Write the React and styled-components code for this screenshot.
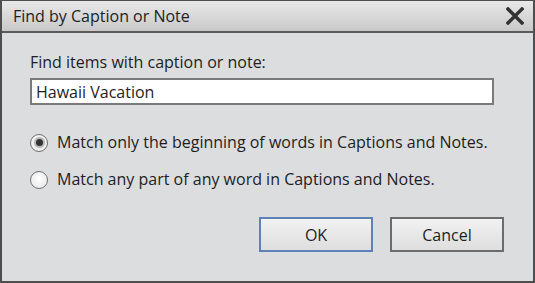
import React, { useState } from "react"
import styled, { createGlobalStyle } from "styled-components"

const Global = createGlobalStyle`
  html, body {
    margin: 0;
    padding: 0;
    background: #dcdddf;
  }
  * {
    box-sizing: border-box;
  }
`

const Window = styled.div`
  width: 535px;
  height: 283px;
  display: flex;
  flex-direction: column;
  border: 2px solid #4e4e4e;
  border-top-width: 1px;
  background: #dcdddf;
  font-family: "Open Sans", "Noto Sans", sans-serif;
  color: #1e1e1e;
`

const TitleBar = styled.div`
  height: 32px;
  flex: none;
  display: flex;
  align-items: center;
  justify-content: space-between;
  padding: 0 7px 0 11px;
  background: linear-gradient(#e8e8e8, #c9c9c9);
  border-bottom: 2px solid #5a5a5a;
`

const Title = styled.span`
  font-size: 16px;
  color: #222;
`

const CloseButton = styled.button`
  border: none;
  background: none;
  padding: 0;
  width: 22px;
  height: 22px;
  display: flex;
  align-items: center;
  justify-content: center;
  cursor: pointer;
`

const Body = styled.div`
  flex: 1;
  display: flex;
  flex-direction: column;
  padding: 19px 29px 0 28px;
`

const Label = styled.label`
  font-size: 16px;
  line-height: 21px;
  margin-bottom: 5px;
`

const TextInput = styled.input`
  width: 464px;
  height: 27px;
  border: 2px solid #7a7a7a;
  background: #fff;
  font-family: inherit;
  font-size: 16px;
  padding: 0 4px;
  color: #1e1e1e;
  outline: none;
`

const Options = styled.div`
  display: flex;
  flex-direction: column;
  gap: 16px;
  margin-top: 27px;
`

const Option = styled.label`
  display: flex;
  align-items: center;
  gap: 9px;
  font-size: 16px;
  line-height: 21px;
  cursor: pointer;
`

const RadioDot = styled.span`
  flex: none;
  width: 18px;
  height: 18px;
  border-radius: 50%;
  border: 1px solid #6e6e6e;
  background: radial-gradient(circle at 50% 40%, #ffffff, #e2e2e2);
  display: flex;
  align-items: center;
  justify-content: center;
  box-shadow: inset 0 0 0 1px #f4f4f4;

  &::after {
    content: "";
    width: 7px;
    height: 7px;
    border-radius: 50%;
    background: #333;
    box-shadow: 0 0 0 2px #b8b8b8;
    display: ${p => (p.$checked ? "block" : "none")};
  }
`

const HiddenRadio = styled.input`
  display: none;
`

const Buttons = styled.div`
  display: flex;
  justify-content: flex-end;
  gap: 17px;
  margin-top: 27px;
`

const Button = styled.button`
  width: 114px;
  height: 35px;
  border: 2px solid ${p => (p.$primary ? "#5e82b8" : "#6c6c6c")};
  background: linear-gradient(#f2f2f2, #dedede);
  font-family: inherit;
  font-size: 16px;
  color: #1e1e1e;
  cursor: pointer;
`

const options = [
  { id: "begin", text: "Match only the beginning of words in Captions and Notes." },
  { id: "any", text: "Match any part of any word in Captions and Notes." },
]

export default function App() {
  const [query, setQuery] = useState("Hawaii Vacation")
  const [mode, setMode] = useState("begin")

  return (
    <>
      <Global />
      <Window>
        <TitleBar>
          <Title>Find by Caption or Note</Title>
          <CloseButton aria-label="Close">
            <svg width="18" height="18" viewBox="0 0 18 18">
              <path d="M2 2 L16 16 M16 2 L2 16" stroke="#333" strokeWidth="3.4" strokeLinecap="square" />
            </svg>
          </CloseButton>
        </TitleBar>
        <Body>
          <Label htmlFor="find">Find items with caption or note:</Label>
          <TextInput id="find" value={query} onChange={e => setQuery(e.target.value)} />
          <Options>
            {options.map(o => (
              <Option key={o.id}>
                <HiddenRadio type="radio" name="mode" checked={mode === o.id} onChange={() => setMode(o.id)} />
                <RadioDot $checked={mode === o.id} />
                {o.text}
              </Option>
            ))}
          </Options>
          <Buttons>
            <Button $primary>OK</Button>
            <Button>Cancel</Button>
          </Buttons>
        </Body>
      </Window>
    </>
  )
}
